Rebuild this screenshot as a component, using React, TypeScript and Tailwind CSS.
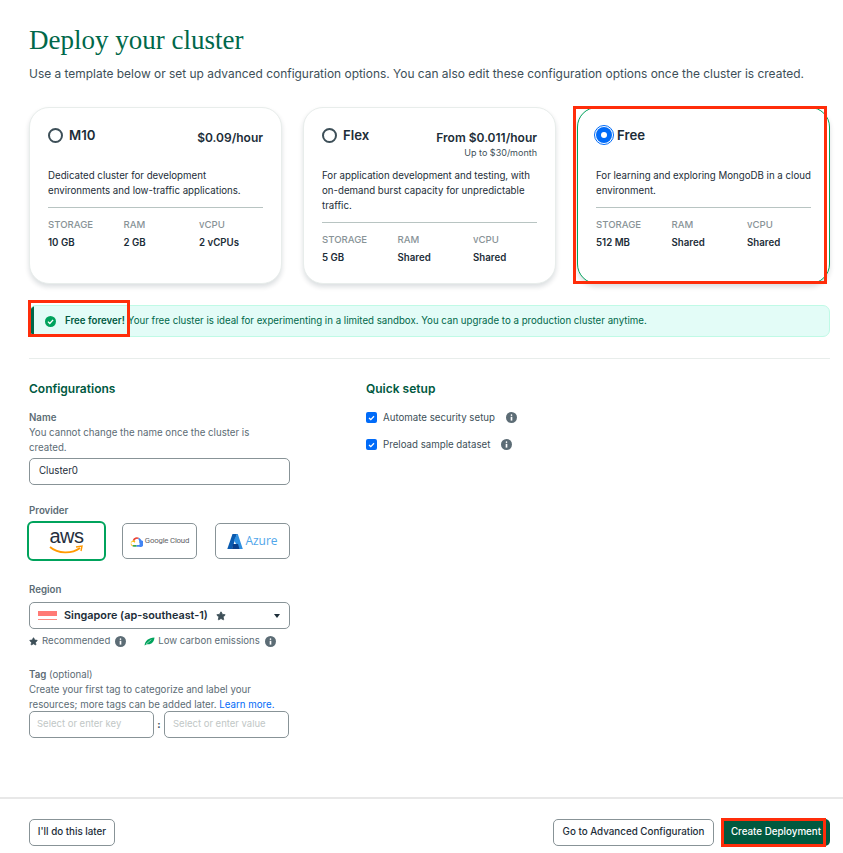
import { Star } from "lucide-react";

const FONT = "font-['Inter','Liberation_Sans',sans-serif]";

type Plan = {
  name: string;
  price?: string;
  note?: string;
  desc: string[];
  specs: [string, string][];
  selected?: boolean;
};

const PLANS: Plan[] = [
  {
    name: "M10",
    price: "$0.09/hour",
    desc: ["Dedicated cluster for development", "environments and low-traffic applications."],
    specs: [["STORAGE", "10 GB"], ["RAM", "2 GB"], ["vCPU", "2 vCPUs"]],
  },
  {
    name: "Flex",
    price: "From $0.011/hour",
    note: "Up to $30/month",
    desc: ["For application development and testing, with", "on-demand burst capacity for unpredictable", "traffic."],
    specs: [["STORAGE", "5 GB"], ["RAM", "Shared"], ["vCPU", "Shared"]],
  },
  {
    name: "Free",
    desc: ["For learning and exploring MongoDB in a cloud", "environment."],
    specs: [["STORAGE", "512 MB"], ["RAM", "Shared"], ["vCPU", "Shared"]],
    selected: true,
  },
];

function InfoIcon() {
  return (
    <svg width="11" height="11" viewBox="0 0 16 16" className="shrink-0">
      <circle cx="8" cy="8" r="8" fill="#5c6c75" />
      <rect x="6.8" y="7" width="2.4" height="5.5" fill="#fff" />
      <rect x="6.8" y="3.4" width="2.4" height="2.4" rx="1.2" fill="#fff" />
    </svg>
  );
}

function Radio({ on }: { on?: boolean }) {
  if (on) {
    return (
      <span className="flex h-[20px] w-[20px] shrink-0 items-center justify-center rounded-full border border-[#016bf8] bg-white">
        <span className="flex h-[16px] w-[16px] items-center justify-center rounded-full bg-[#016bf8]">
          <span className="h-[6px] w-[6px] rounded-full bg-white" />
        </span>
      </span>
    );
  }
  return <span className="h-[15px] w-[15px] shrink-0 rounded-full border-2 border-[#3d4f58] bg-white" />;
}

function PlanCard({ plan }: { plan: Plan }) {
  return (
    <div
      className={`h-[177px] w-[253px] rounded-[20px] border bg-white px-[18px] pt-[17px] shadow-[0_3px_5px_rgba(0,30,43,0.14)] ${
        plan.selected ? "border-[#00a35c]" : "border-[#e8edeb]"
      }`}
    >
      <div className={`flex h-[39px] justify-between ${plan.selected ? "-ml-[2px]" : ""}`}>
        <div className={`flex h-[20px] items-center ${plan.selected ? "gap-[3px]" : "gap-[6px]"}`}>
          <Radio on={plan.selected} />
          <span className="pt-[2px] text-[13.2px] font-semibold text-[#1c2d38]">{plan.name}</span>
        </div>
        {plan.price && (
          <div className="pt-[4px] text-right">
            <div className="text-[12px] leading-[18px] font-semibold text-[#1c2d38]">{plan.price}</div>
            {plan.note && <div className="text-[9px] leading-[11px] text-[#3d4f58]">{plan.note}</div>}
          </div>
        )}
      </div>
      <div className="mt-[4px] border-b border-[#b8c4c2] pb-[9px] text-[9.7px] leading-[15px] whitespace-nowrap text-[#1c2d38]">
        {plan.desc.map((line) => (
          <div key={line}>{line}</div>
        ))}
      </div>
      <div className="mt-[9px] grid grid-cols-[75.5px_75.5px_1fr]">
        {plan.specs.map(([label, value]) => (
          <div key={label}>
            <div className="text-[9.6px] leading-[15px] font-medium text-[#889397]">{label}</div>
            <div className="mt-[3px] text-[9.7px] leading-[15px] font-semibold text-[#1c2d38]">{value}</div>
          </div>
        ))}
      </div>
    </div>
  );
}

function Label({ children }: { children: React.ReactNode }) {
  return <div className="text-[9.7px] leading-[15px] font-semibold text-[#5c6c75]">{children}</div>;
}

function AwsLogo() {
  return (
    <div className="flex flex-col items-center">
      <span className="font-['Liberation_Sans',sans-serif] text-[20px] leading-[16px] font-normal tracking-[-0.5px] text-[#252f3e]">
        aws
      </span>
      <svg width="34" height="10" viewBox="0 0 34 10" className="mt-[1px]">
        <path d="M1 2 C9 9 23 9 31 3" fill="none" stroke="#f90" strokeWidth="1.8" />
        <path d="M27 2 L33 1 L32 6" fill="none" stroke="#f90" strokeWidth="1.4" />
      </svg>
    </div>
  );
}

function GoogleCloudLogo() {
  return (
    <div className="flex items-center gap-[2px]">
      <svg width="13" height="11" viewBox="0 0 24 19">
        <path d="M15 5 L17 3 A8 8 0 0 0 5 7 L8 9 A5 5 0 0 1 15 5Z" fill="#ea4335" />
        <path d="M21 7 A8 8 0 0 0 17 3 L15 5 A5 5 0 0 1 17 9 A4 4 0 0 1 19 10Z" fill="#4285f4" />
        <path d="M17 9 V12 A3 3 0 0 1 17 16 H12 V19 H17 A6 6 0 0 0 21 7Z" fill="#4285f4" />
        <path d="M7 19 H12 V16 H7 A3 3 0 0 1 6 15.8 L4 18 A6 6 0 0 0 7 19Z" fill="#34a853" />
        <path d="M7 7 A6 6 0 0 0 4 18 L6 15.8 A3 3 0 1 1 8 12 L10 10 A6 6 0 0 0 7 7Z" fill="#fbbc05" />
      </svg>
      <span className="font-['Roboto',sans-serif] text-[7.8px] tracking-[-0.2px] text-[#5f6368]">Google Cloud</span>
    </div>
  );
}

function AzureLogo() {
  return (
    <div className="flex items-center gap-[2px]">
      <svg width="16" height="15" viewBox="0 0 16 15">
        <path d="M5.5 0 H10 L5 15 H0.3 Z" fill="#0b5bb0" />
        <path d="M10 0 H10.8 L15.8 15 H11 L6 10 H9 L7 6 Z" fill="#2f8fe0" />
        <path d="M6 10 H11 L12.5 15 H5 Z" fill="#0a3f8a" />
      </svg>
      <span className="font-['Open_Sans',sans-serif] text-[12px] text-[#50a6ea]">Azure</span>
    </div>
  );
}

function Provider({ active, children }: { active?: boolean; children: React.ReactNode }) {
  return (
    <div
      className={`flex items-center justify-center bg-white ${
        active
          ? "h-[40px] w-[79px] rounded-[6px] border-2 border-[#00a35c]"
          : "h-[36px] w-[75px] rounded-[5px] border border-[#889397]"
      }`}
    >
      {children}
    </div>
  );
}

function Leaf() {
  return (
    <svg width="11" height="9" viewBox="0 0 12 10" className="shrink-0">
      <path d="M0.5 9.5 C1 4 5 0.8 11.5 0.5 C11.5 5 8 9 3 8 Z" fill="#00a35c" />
      <path d="M2 8 L8 3" stroke="#fff" strokeWidth="0.6" />
    </svg>
  );
}

export default function App() {
  return (
    <div className={`flex h-[853px] w-[843px] flex-col overflow-hidden bg-white ${FONT}`}>
      <main className="flex-1 pr-[13px] pl-[29px]">
        <h1 className="pt-[25px] font-['Liberation_Serif',serif] text-[27px] leading-[30px] font-normal text-[#00684a]">
          Deploy your cluster
        </h1>
        <p className="mt-[11px] text-[11.95px] leading-[16px] whitespace-nowrap text-[#3d4f58]">
          Use a template below or set up advanced configuration options. You can also edit these configuration options once the cluster is created.
        </p>

        <div className="mt-[25px] flex gap-[21px]">
          {PLANS.map((plan) => (
            <div key={plan.name} className="relative">
              <PlanCard plan={plan} />
              {plan.selected && (
                <div className="absolute -top-[1px] right-[3px] bottom-0 -left-[4px] border-[3px] border-[#ff2d0a]" />
              )}
            </div>
          ))}
        </div>

        <div className="relative mt-[21px] flex h-[32px] items-center overflow-hidden rounded-[7px] border border-[#c0fae6] bg-[#e3fcf7] pl-[15px] text-[9.7px] whitespace-nowrap text-[#00684a]">
          <span className="absolute top-0 bottom-0 left-0 w-[4px] bg-[#00684a]" />
          <svg width="11" height="11" viewBox="0 0 16 16" className="mr-[9px] shrink-0">
            <circle cx="8" cy="8" r="8" fill="#00a35c" />
            <path d="M4.3 8.2 L7 10.9 L11.8 5.6" fill="none" stroke="#fff" strokeWidth="2" />
          </svg>
          <span className="mr-[3px] font-semibold text-[#00593f]">Free forever!</span>
          Your free cluster is ideal for experimenting in a limited sandbox. You can upgrade to a production cluster anytime.
        </div>
        <div className="relative">
          <div className="absolute -top-[37px] -left-[1px] h-[37px] w-[102px] border-[3px] border-[#ff2d0a]" />
        </div>

        <div className="mt-[21px] border-t border-[#e8edeb]" />

        <div className="mt-[22px] flex gap-[76px]">
          <section className="w-[261px]">
            <h2 className="text-[12px] leading-[16px] font-semibold text-[#00593f]">Configurations</h2>
            <div className="mt-[13px]">
              <Label>Name</Label>
              <div className="text-[9.7px] leading-[15px] text-[#5c6c75]">
                You cannot change the name once the cluster is
                <br />
                created.
              </div>
              <div className="mt-[3px] flex h-[27px] items-center rounded-[5px] border border-[#889397] px-[9px] text-[9.75px] text-[#1c2d38]">
                Cluster0
              </div>
            </div>

            <div className="mt-[18px]">
              <Label>Provider</Label>
              <div className="mt-[3px] -ml-[2px] flex items-center">
                <Provider active>
                  <AwsLogo />
                </Provider>
                <div className="ml-[16px]">
                  <Provider>
                    <GoogleCloudLogo />
                  </Provider>
                </div>
                <div className="ml-[18px]">
                  <Provider>
                    <AzureLogo />
                  </Provider>
                </div>
              </div>
            </div>

            <div className="mt-[21px]">
              <Label>Region</Label>
              <div className="mt-[5px] flex h-[27px] items-center rounded-[5px] border border-[#889397] pr-[9px] pl-[8px]">
                <span className="flex h-[9px] w-[19px] flex-col border-b border-[#ff8a80]">
                  <span className="h-[5px] bg-[#ff7a75]" />
                </span>
                <span className="ml-[7px] text-[10.85px] font-semibold text-[#1c2d38]">Singapore (ap-southeast-1)</span>
                <Star size={10} className="ml-[8px] fill-[#3d4f58] text-[#3d4f58]" />
                <span className="ml-auto h-0 w-0 border-x-[3px] border-t-[4px] border-x-transparent border-t-[#1c2d38]" />
              </div>
              <div className="mt-[5px] flex h-[15px] items-center text-[9.6px] text-[#5c6c75]">
                <Star size={9} className="fill-[#3d4f58] text-[#3d4f58]" />
                <span className="mr-[5px] ml-[4px]">Recommended</span>
                <InfoIcon />
                <span className="ml-[18px]">
                  <Leaf />
                </span>
                <span className="mr-[5px] ml-[3px]">Low carbon emissions</span>
                <InfoIcon />
              </div>
            </div>

            <div className="mt-[18px]">
              <div className="text-[9.7px] leading-[15px] text-[#5c6c75]">
                <span className="font-semibold">Tag</span> (optional)
              </div>
              <div className="text-[9.7px] leading-[15px] text-[#5c6c75]">
                <div>Create your first tag to categorize and label your</div>
                <div>
                  resources; more tags can be added later. <span className="text-[#016bf8]">Learn more.</span>
                </div>
              </div>
              <div className="-mt-[1px] flex items-center">
                <div className="flex h-[27px] w-[125px] items-center rounded-[5px] border border-[#889397] px-[7px] text-[9.5px] text-[#c1c7c6]">
                  Select or enter key
                </div>
                <span className="w-[10px] text-center text-[10px] font-bold text-[#3d4f58]">:</span>
                <div className="flex h-[27px] w-[125px] items-center rounded-[5px] border border-[#889397] px-[8px] text-[9.5px] text-[#c1c7c6]">
                  Select or enter value
                </div>
              </div>
            </div>
          </section>

          <section>
            <h2 className="text-[12px] leading-[16px] font-semibold text-[#00593f]">Quick setup</h2>
            <div className="mt-[13px] flex flex-col gap-[12px] text-[9.7px] leading-[15px] text-[#3d4f58]">
              {["Automate security setup", "Preload sample dataset"].map((text) => (
                <div key={text} className="flex items-center">
                  <span className="flex h-[11px] w-[11px] items-center justify-center rounded-[2px] bg-[#016bf8]">
                    <svg width="7" height="6" viewBox="0 0 7 6">
                      <path d="M1 3 L2.8 4.6 L6 1.2" fill="none" stroke="#fff" strokeWidth="1.3" />
                    </svg>
                  </span>
                  <span className="ml-[6px]">{text}</span>
                  <span className="ml-[11px]">
                    <InfoIcon />
                  </span>
                </div>
              ))}
            </div>
          </section>
        </div>
      </main>

      <footer className="flex h-[56px] items-start justify-between border-t-2 border-[#e8e8e8] pt-[20px] pr-[13px] pl-[29px] text-[9.8px] font-medium">
        <button className="h-[27px] w-[86px] rounded-[5px] border border-[#889397] bg-white text-[#1c2d38]">
          I'll do this later
        </button>
        <div className="flex gap-[8px]">
          <button className="h-[27px] w-[161px] rounded-[5px] border border-[#889397] bg-white text-[#1c2d38]">
            Go to Advanced Configuration
          </button>
          <div className="relative">
            <button className="h-[27px] w-[108px] rounded-[5px] bg-[#00593f] text-white">Create Deployment</button>
            <div className="absolute -top-[1px] right-[4px] -bottom-[1px] -left-[1px] border-[3px] border-[#ff2d0a]" />
          </div>
        </div>
      </footer>
    </div>
  );
}
